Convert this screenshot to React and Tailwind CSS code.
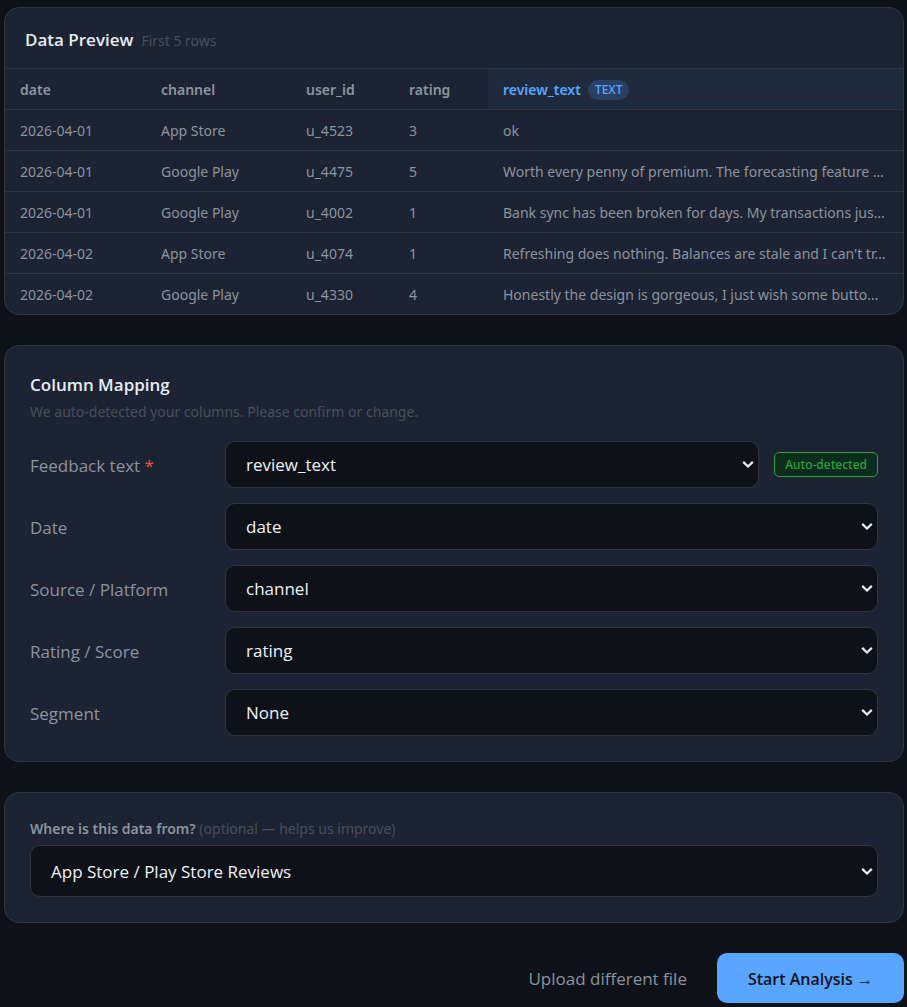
import React from "react";

const columns = ["date", "channel", "user_id", "rating"];

const rows = [
  ["2026-04-01", "App Store", "u_4523", "3", "ok"],
  ["2026-04-01", "Google Play", "u_4475", "5", "Worth every penny of premium. The forecasting feature …"],
  ["2026-04-01", "Google Play", "u_4002", "1", "Bank sync has been broken for days. My transactions jus…"],
  ["2026-04-02", "App Store", "u_4074", "1", "Refreshing does nothing. Balances are stale and I can't tr…"],
  ["2026-04-02", "Google Play", "u_4330", "4", "Honestly the design is gorgeous, I just wish some butto…"],
];

const options = ["None", "date", "channel", "user_id", "rating", "review_text"];

const mappings = [
  { id: "text", label: "Feedback text", value: "review_text", required: true, detected: true },
  { id: "date", label: "Date", value: "date" },
  { id: "source", label: "Source / Platform", value: "channel" },
  { id: "score", label: "Rating / Score", value: "rating" },
  { id: "segment", label: "Segment", value: "None" },
];

function Card({ className = "", children }) {
  return (
    <section className={`overflow-hidden rounded-[15px] border border-[#30363d] bg-[#1c2333] ${className}`}>
      {children}
    </section>
  );
}

function Select({ id, value, choices, className = "", boxClassName = "" }) {
  return (
    <div className={`grid min-w-0 items-center ${className}`}>
      <select
        id={id}
        defaultValue={value}
        className={`col-start-1 row-start-1 w-full appearance-none rounded-[10px] border border-[#30363d] bg-[#0e1117] pt-0.5 pr-8 pl-5 text-[17px] text-[#f0f3f6] ${boxClassName}`}
      >
        {choices.map((c) => (
          <option key={c}>{c}</option>
        ))}
      </select>
      <svg
        viewBox="0 0 12 8"
        aria-hidden="true"
        className="pointer-events-none col-start-1 row-start-1 mr-[5px] h-2 w-3 justify-self-end"
      >
        <path d="M1.2 1.9 6 6.5l4.8-4.6" fill="none" stroke="#e6edf3" strokeWidth="2.2" />
      </svg>
    </div>
  );
}

function DataPreview() {
  return (
    <Card>
      <div className="flex h-15 items-center gap-2 px-5 pt-1">
        <h2 className="text-[17px] font-semibold text-[#e6edf3]">Data Preview</h2>
        <span className="pt-0.5 font-['Noto_Sans',sans-serif] text-sm text-[#484f58]">First 5 rows</span>
      </div>
      <table className="w-full table-fixed border-collapse text-left font-['Noto_Sans',sans-serif] text-sm text-[#8b949e]">
        <colgroup>
          <col className="w-[141px]" />
          <col className="w-[145px]" />
          <col className="w-[103px]" />
          <col className="w-[94px]" />
          <col />
        </colgroup>
        <thead>
          <tr className="h-[41px] border-t border-[#30363d]">
            {columns.map((c) => (
              <th key={c} className="px-[15px] pt-0.5 font-semibold">{c}</th>
            ))}
            <th className="bg-[#1f2a3d] px-[15px] pt-0.5 font-semibold text-[#58a6ff]">
              <span className="flex items-center gap-[7px]">
                review_text
                <span className="rounded-full bg-[#2a4165] px-[7px] text-xs leading-5 font-medium">TEXT</span>
              </span>
            </th>
          </tr>
        </thead>
        <tbody>
          {rows.map((r, i) => (
            <tr key={i} className="h-[41px] border-t border-[#30363d] last:h-10">
              {r.map((cell, j) => (
                <td key={j} className="truncate px-[15px] pt-0.5">{cell}</td>
              ))}
            </tr>
          ))}
        </tbody>
      </table>
    </Card>
  );
}

function ColumnMapping() {
  return (
    <Card className="p-[25px]">
      <h2 className="text-[17px] leading-7 font-semibold text-[#e6edf3]">Column Mapping</h2>
      <p className="font-['Noto_Sans',sans-serif] text-sm leading-[26px] text-[#484f58]">
        We auto-detected your columns. Please confirm or change.
      </p>
      <div className="mt-4 flex flex-col gap-[15px]">
        {mappings.map((m) => (
          <div key={m.id} className="flex items-center">
            <label htmlFor={m.id} className="w-[195px] shrink-0 pt-[3px] text-[17px] text-[#8b949e]">
              {m.label}
              {m.required && <span className="text-[#f85149]"> *</span>}
            </label>
            <Select id={m.id} value={m.value} choices={options} className="flex-1" boxClassName="h-[47px]" />
            {m.detected && (
              <span className="ml-[15px] rounded-[5px] border border-[#2ea043] bg-[#0d2d1c] px-[10px] font-['Noto_Sans',sans-serif] text-xs leading-[23px] font-medium text-[#2ea043]">
                Auto-detected
              </span>
            )}
          </div>
        ))}
      </div>
    </Card>
  );
}

function DataSource() {
  return (
    <Card className="p-[25px]">
      <label
        htmlFor="origin"
        className="block font-['Noto_Sans',sans-serif] text-sm leading-[22px] font-semibold text-[#8b949e]"
      >
        Where is this data from?{" "}
        <span className="font-normal text-[#484f58]">(optional — helps us improve)</span>
      </label>
      <Select
        id="origin"
        value="App Store / Play Store Reviews"
        choices={["App Store / Play Store Reviews", "Survey", "Support tickets", "Other"]}
        className="mt-[5px]"
        boxClassName="h-[52px]"
      />
    </Card>
  );
}

export default function App() {
  return (
    <main className="flex min-h-screen flex-col gap-[30px] bg-[#0e1117] pt-[7px] pr-[3px] pb-1 pl-1 font-['Open_Sans','Noto_Sans',sans-serif]">
      <DataPreview />
      <ColumnMapping />
      <DataSource />
      <div className="flex items-center justify-end gap-[30px]">
        <button type="button" className="pt-0.5 text-[17px] text-[#8b949e]">Upload different file</button>
        <button type="button" className="h-[50px] rounded-[10px] bg-[#58a6ff] px-[31px] pt-0.5 text-base font-semibold text-[#0e1117]">
          Start Analysis →
        </button>
      </div>
    </main>
  );
}
